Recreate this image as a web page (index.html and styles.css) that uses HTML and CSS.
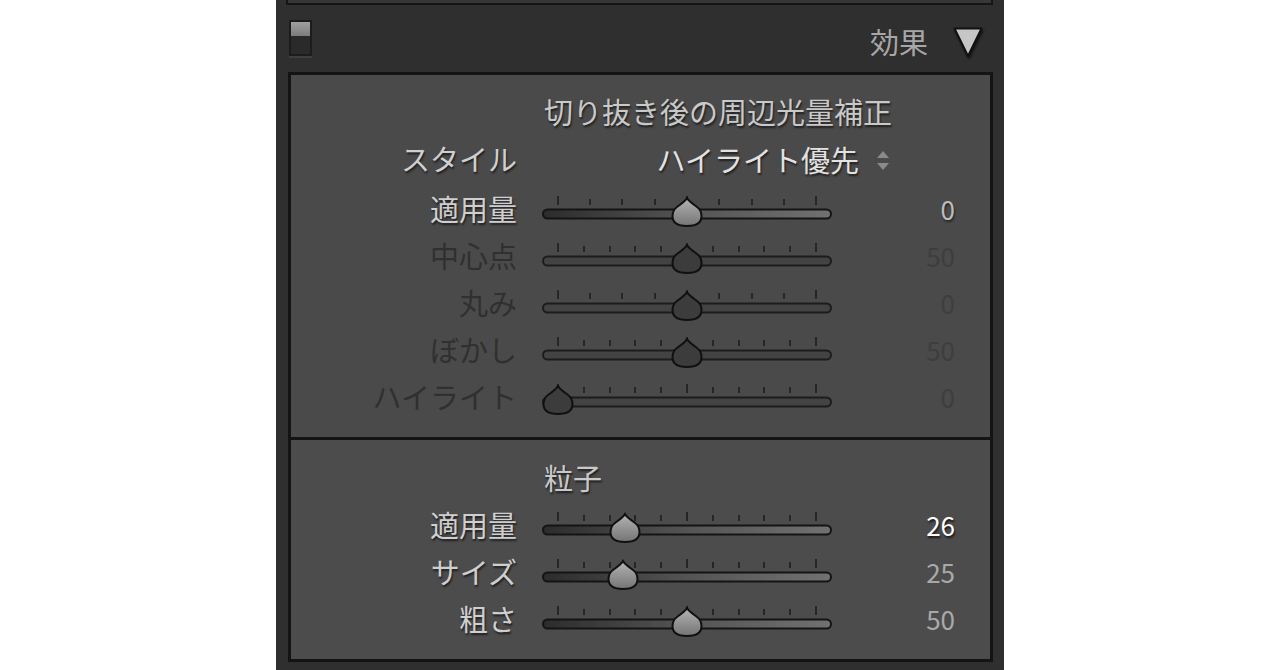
FILE: index.html
```html
<!DOCTYPE html>
<html lang="ja">
<head>
<meta charset="utf-8">
<title>効果</title>
<link rel="stylesheet" href="styles.css">
</head>
<body>
<svg class="defs" width="0" height="0" aria-hidden="true">
  <defs>
    <linearGradient id="trackOn" x1="0" y1="0" x2="1" y2="0">
      <stop offset="0" stop-color="#2c2c2c"/>
      <stop offset="0.5" stop-color="#545454"/>
      <stop offset="1" stop-color="#717171"/>
    </linearGradient>
    <linearGradient id="thumbOn" x1="0" y1="0" x2="0" y2="1">
      <stop offset="0" stop-color="#b4b4b4"/>
      <stop offset="1" stop-color="#747474"/>
    </linearGradient>
    <linearGradient id="swTop" x1="0" y1="0" x2="0" y2="1">
      <stop offset="0" stop-color="#a0a0a0"/>
      <stop offset="1" stop-color="#7c7c7c"/>
    </linearGradient>
    <path id="thumb" d="M0 4 C2 7.5 6 10 10 13 C13.5 15.5 14.5 18 14.5 22 C14.5 28.5 9 32 0 32 C-9 32 -14.5 28.5 -14.5 22 C-14.5 18 -13.5 15.5 -10 13 C-6 10 -2 7.5 0 4 Z"/>
  </defs>
</svg>

<div class="app">
  <div class="topbar"></div>
  <header class="hdr">
    <svg class="switch" width="24" height="38" viewBox="0 0 24 38">
      <rect x="0" y="0" width="23" height="36" fill="#1c1c1c"/>
      <rect x="2" y="2" width="19" height="14" fill="url(#swTop)"/>
      <rect x="2" y="16" width="19" height="18" fill="#2a2a2a"/>
      <rect x="0" y="36" width="23" height="2" fill="#3e3e3e"/>
    </svg>
    <div class="hdr-right">
      <span class="hdr-title">効果</span>
      <svg class="tri" width="30" height="31" viewBox="0 0 30 31">
        <polygon points="1.5,1.5 28.5,1.5 15,29" fill="#c6c6c6" stroke="#111" stroke-width="2" stroke-linejoin="round"/>
      </svg>
    </div>
  </header>

  <div class="panel">
    <section class="sec sec1">
      <div class="title">切り抜き後の周辺光量補正</div>
      <div class="row">
        <span class="lbl on">スタイル</span>
        <span class="dd">ハイライト優先
          <svg class="updown" width="14" height="24" viewBox="0 0 14 24">
            <polygon points="7,2 13,9 1,9" fill="#8a8a8a"/>
            <polygon points="1,14 13,14 7,21" fill="#8a8a8a"/>
          </svg>
        </span>
      </div>

      <div class="row srow first">
        <span class="lbl on">適用量</span>
        <svg class="sl on" width="290" height="34" viewBox="0 0 290 34">
          <path class="ticks" d="M16 2V11M48 5V11M80 5V11M113 5V11M145 2V11M177 5V11M210 5V11M242 5V11M274 2V11"/>
          <rect class="track" x="1" y="15.5" width="288" height="9" rx="4.5"/>
          <use href="#thumb" class="thumb" transform="translate(145 0)"/>
        </svg>
        <span class="val on">0</span>
      </div>

      <div class="row srow">
        <span class="lbl off">中心点</span>
        <svg class="sl off" width="290" height="34" viewBox="0 0 290 34">
          <path class="ticks" d="M16 2V11M42 5V11M68 5V11M93 5V11M119 5V11M145 2V11M171 5V11M197 5V11M222 5V11M248 5V11M274 2V11"/>
          <rect class="track" x="1" y="15.5" width="288" height="9" rx="4.5"/>
          <use href="#thumb" class="thumb" transform="translate(145 0)"/>
        </svg>
        <span class="val off">50</span>
      </div>

      <div class="row srow">
        <span class="lbl off">丸み</span>
        <svg class="sl off" width="290" height="34" viewBox="0 0 290 34">
          <path class="ticks" d="M16 2V11M48 5V11M80 5V11M113 5V11M145 2V11M177 5V11M210 5V11M242 5V11M274 2V11"/>
          <rect class="track" x="1" y="15.5" width="288" height="9" rx="4.5"/>
          <use href="#thumb" class="thumb" transform="translate(145 0)"/>
        </svg>
        <span class="val off">0</span>
      </div>

      <div class="row srow">
        <span class="lbl off">ぼかし</span>
        <svg class="sl off" width="290" height="34" viewBox="0 0 290 34">
          <path class="ticks" d="M16 2V11M42 5V11M68 5V11M93 5V11M119 5V11M145 2V11M171 5V11M197 5V11M222 5V11M248 5V11M274 2V11"/>
          <rect class="track" x="1" y="15.5" width="288" height="9" rx="4.5"/>
          <use href="#thumb" class="thumb" transform="translate(145 0)"/>
        </svg>
        <span class="val off">50</span>
      </div>

      <div class="row srow">
        <span class="lbl off">ハイライト</span>
        <svg class="sl off" width="290" height="34" viewBox="0 0 290 34">
          <path class="ticks" d="M16 2V11M42 5V11M68 5V11M93 5V11M119 5V11M145 2V11M171 5V11M197 5V11M222 5V11M248 5V11M274 2V11"/>
          <rect class="track" x="1" y="15.5" width="288" height="9" rx="4.5"/>
          <use href="#thumb" class="thumb" transform="translate(16 0)"/>
        </svg>
        <span class="val off">0</span>
      </div>
    </section>

    <section class="sec sec2">
      <div class="title">粒子</div>

      <div class="row srow">
        <span class="lbl on">適用量</span>
        <svg class="sl on" width="290" height="34" viewBox="0 0 290 34">
          <path class="ticks" d="M16 2V11M42 5V11M68 5V11M93 5V11M119 5V11M145 2V11M171 5V11M197 5V11M222 5V11M248 5V11M274 2V11"/>
          <rect class="track" x="1" y="15.5" width="288" height="9" rx="4.5"/>
          <use href="#thumb" class="thumb" transform="translate(83 0)"/>
        </svg>
        <span class="val hi">26</span>
      </div>

      <div class="row srow">
        <span class="lbl on">サイズ</span>
        <svg class="sl on" width="290" height="34" viewBox="0 0 290 34">
          <path class="ticks" d="M16 2V11M42 5V11M68 5V11M93 5V11M119 5V11M145 2V11M171 5V11M197 5V11M222 5V11M248 5V11M274 2V11"/>
          <rect class="track" x="1" y="15.5" width="288" height="9" rx="4.5"/>
          <use href="#thumb" class="thumb" transform="translate(81 0)"/>
        </svg>
        <span class="val mid">25</span>
      </div>

      <div class="row srow">
        <span class="lbl on">粗さ</span>
        <svg class="sl on" width="290" height="34" viewBox="0 0 290 34">
          <path class="ticks" d="M16 2V11M42 5V11M68 5V11M93 5V11M119 5V11M145 2V11M171 5V11M197 5V11M222 5V11M248 5V11M274 2V11"/>
          <rect class="track" x="1" y="15.5" width="288" height="9" rx="4.5"/>
          <use href="#thumb" class="thumb" transform="translate(145 0)"/>
        </svg>
        <span class="val mid">50</span>
      </div>
    </section>
  </div>
</div>
</body>
</html>
```

FILE: styles.css
```css
html, body {
  margin: 0;
  padding: 0;
  background: #ffffff;
}

body {
  font-family: "Noto Sans CJK JP", "Noto Sans", sans-serif;
}

.defs {
  position: absolute;
  width: 0;
  height: 0;
  overflow: hidden;
}

.app {
  width: 728px;
  height: 670px;
  margin-left: 276px;
  background: #2f2f2f;
  display: flex;
  flex-direction: column;
}

.topbar {
  height: 3px;
  margin: 0 11px 0 10px;
  background: #373737;
  border: 2px solid #151515;
  border-top: 0;
}

.hdr {
  height: 67px;
  display: flex;
  align-items: center;
  justify-content: space-between;
  padding: 0 21px 0 13px;
}

.switch {
  display: block;
}

.hdr-right {
  display: flex;
  align-items: center;
  gap: 25px;
  margin-top: 8px;
}

.hdr-title {
  font-size: 29px;
  line-height: 34px;
  margin-top: -4px;
  color: #a7a7a7;
}

.tri {
  display: block;
  filter: drop-shadow(1px 2px 1px rgba(0, 0, 0, 0.6));
}

.panel {
  margin: 0 11px 0 12px;
  height: 584px;
  border: 3px solid #141414;
  background: #4a4a4a;
  display: flex;
  flex-direction: column;
}

.sec {
  display: flex;
  flex-direction: column;
}

.sec1 {
  height: 362px;
  padding-top: 15px;
  box-sizing: border-box;
}

.sec2 {
  height: 222px;
  padding-top: 16px;
  box-sizing: border-box;
  border-top: 3px solid #141414;
  background: #4c4c4c;
}

.title {
  height: 43px;
  line-height: 43px;
  padding-bottom: 4px;
  padding-left: 253px;
  font-size: 29px;
  color: #c9c9c9;
  white-space: nowrap;
  text-shadow: 1px 2px 2px rgba(0, 0, 0, 0.6);
}

.row {
  height: 47px;
  display: flex;
  align-items: center;
  white-space: nowrap;
}

.srow.first {
  margin-top: 3px;
}

.lbl {
  width: 226px;
  text-align: right;
  font-size: 29px;
  line-height: 43px;
  margin-bottom: 4px;
}

.lbl.on {
  color: #cfcfcf;
  text-shadow: 1px 2px 2px rgba(0, 0, 0, 0.6);
}

.lbl.off {
  color: #303030;
}

.dd {
  margin-left: 25px;
  width: 348px;
  display: flex;
  justify-content: flex-end;
  align-items: center;
  gap: 17px;
  font-size: 29px;
  line-height: 43px;
  margin-bottom: 2px;
  color: #e2e2e2;
  text-shadow: 1px 2px 2px rgba(0, 0, 0, 0.6);
}

.updown {
  display: block;
  margin-top: 2px;
}

.sl {
  display: block;
  margin-left: 25px;
  flex: none;
}

.sl .ticks {
  stroke: #262626;
  stroke-width: 2;
  fill: none;
}

.sl .track {
  stroke: #141414;
  stroke-width: 2;
}

.sl.on .track {
  fill: url(#trackOn);
}

.sl.off .track {
  fill: #434343;
  stroke: #1c1c1c;
}

.sl .thumb {
  stroke: #101010;
  stroke-width: 2;
}

.sl.on .thumb {
  fill: url(#thumbOn);
}

.sl.off .thumb {
  fill: #3c3c3c;
}

.val {
  width: 123px;
  text-align: right;
  font-size: 26px;
  line-height: 43px;
  margin-bottom: 4px;
}

.val.on {
  color: #bcbcbc;
  text-shadow: 1px 2px 2px rgba(0, 0, 0, 0.5);
}

.val.off {
  color: #3e3e3e;
}

.val.hi {
  color: #ffffff;
  text-shadow: 1px 2px 2px rgba(0, 0, 0, 0.7);
}

.val.mid {
  color: #a9a9a9;
}
```
